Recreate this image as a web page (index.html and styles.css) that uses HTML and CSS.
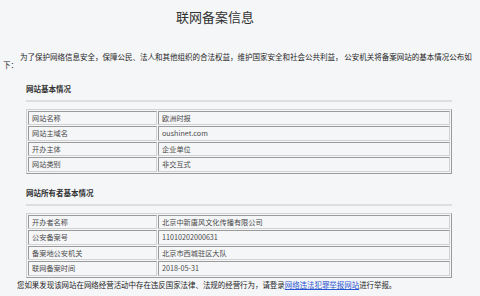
FILE: index.html
```html
<!DOCTYPE html>
<html lang="zh-CN">
<head>
<meta charset="utf-8">
<title>联网备案信息</title>
<link rel="stylesheet" href="styles.css">
</head>
<body>
<div class="page">
  <h1 class="title">联网备案信息</h1>
  <p class="intro">为了保护网络信息安全，保障公民、法人和其他组织的合法权益，维护国家安全和社会公共利益， 公安机关将备案网站的基本情况公布如下：</p>

  <h2 class="section-title">网站基本情况</h2>
  <div class="rule"></div>
  <table class="info">
    <tr><td class="key">网站名称</td><td class="val">欧洲时报</td></tr>
    <tr><td class="key">网站主域名</td><td class="val">oushinet.com</td></tr>
    <tr><td class="key">开办主体</td><td class="val">企业单位</td></tr>
    <tr><td class="key">网站类别</td><td class="val">非交互式</td></tr>
  </table>

  <h2 class="section-title">网站所有者基本情况</h2>
  <div class="rule"></div>
  <table class="info">
    <tr><td class="key">开办者名称</td><td class="val">北京中新唐风文化传播有限公司</td></tr>
    <tr><td class="key">公安备案号</td><td class="val">11010202000631</td></tr>
    <tr><td class="key">备案地公安机关</td><td class="val">北京市西城驻区大队</td></tr>
    <tr><td class="key">联网备案时间</td><td class="val">2018-05-31</td></tr>
  </table>

  <p class="notice">您如果发现该网站在网络经营活动中存在违反国家法律、法规的经营行为，请登录<a href="#" class="link">网络违法犯罪举报网站</a>进行举报。</p>
</div>
</body>
</html>
```

FILE: styles.css
```css
html, body {
  margin: 0;
  padding: 0;
  background: #f5f6f8;
}
body {
  font-family: "Noto Sans CJK SC", "Noto Sans", "Liberation Sans", sans-serif;
  color: #333;
}
.page {
  width: 480px;
  height: 296px;
  overflow: hidden;
}
.title {
  margin: 0;
  padding: 9px 0 0 176px;
  font-size: 13px;
  line-height: 16px;
  font-weight: normal;
  color: #333;
}
.intro {
  margin: 28px 2px 0 3px;
  font-size: 7.5px;
  line-height: 8.4px;
  text-indent: 17px;
  color: #1e1e1e;
}
.section-title {
  margin: 14px 0 0 26px;
  font-size: 7.5px;
  line-height: 10px;
  font-weight: bold;
  color: #333;
}
.rule {
  margin: 6px 0 0 26px;
  width: 426px;
  height: 2px;
  background: #dedede;
}
.info {
  margin: 7px 0 0 26px;
  width: 426px;
  border-collapse: separate;
  border-spacing: 1px;
  border: 1px solid;
  border-color: #d2d2d2 #9a9a9a #9a9a9a #d2d2d2;
  font-size: 7.2px;
  color: #4a4a4a;
}
.info td {
  height: 12.5px;
  padding: 0 3px;
  border: 1px solid;
  border-color: #9a9a9a #d2d2d2 #d2d2d2 #9a9a9a;
  line-height: 12.5px;
  white-space: nowrap;
}
.info .key {
  width: 121px;
}
.notice {
  margin: 2px 0 0 17px;
  font-size: 7.45px;
  line-height: 10px;
  color: #1e1e1e;
}
.link {
  color: #2a55d0;
  text-decoration: underline;
}
```
